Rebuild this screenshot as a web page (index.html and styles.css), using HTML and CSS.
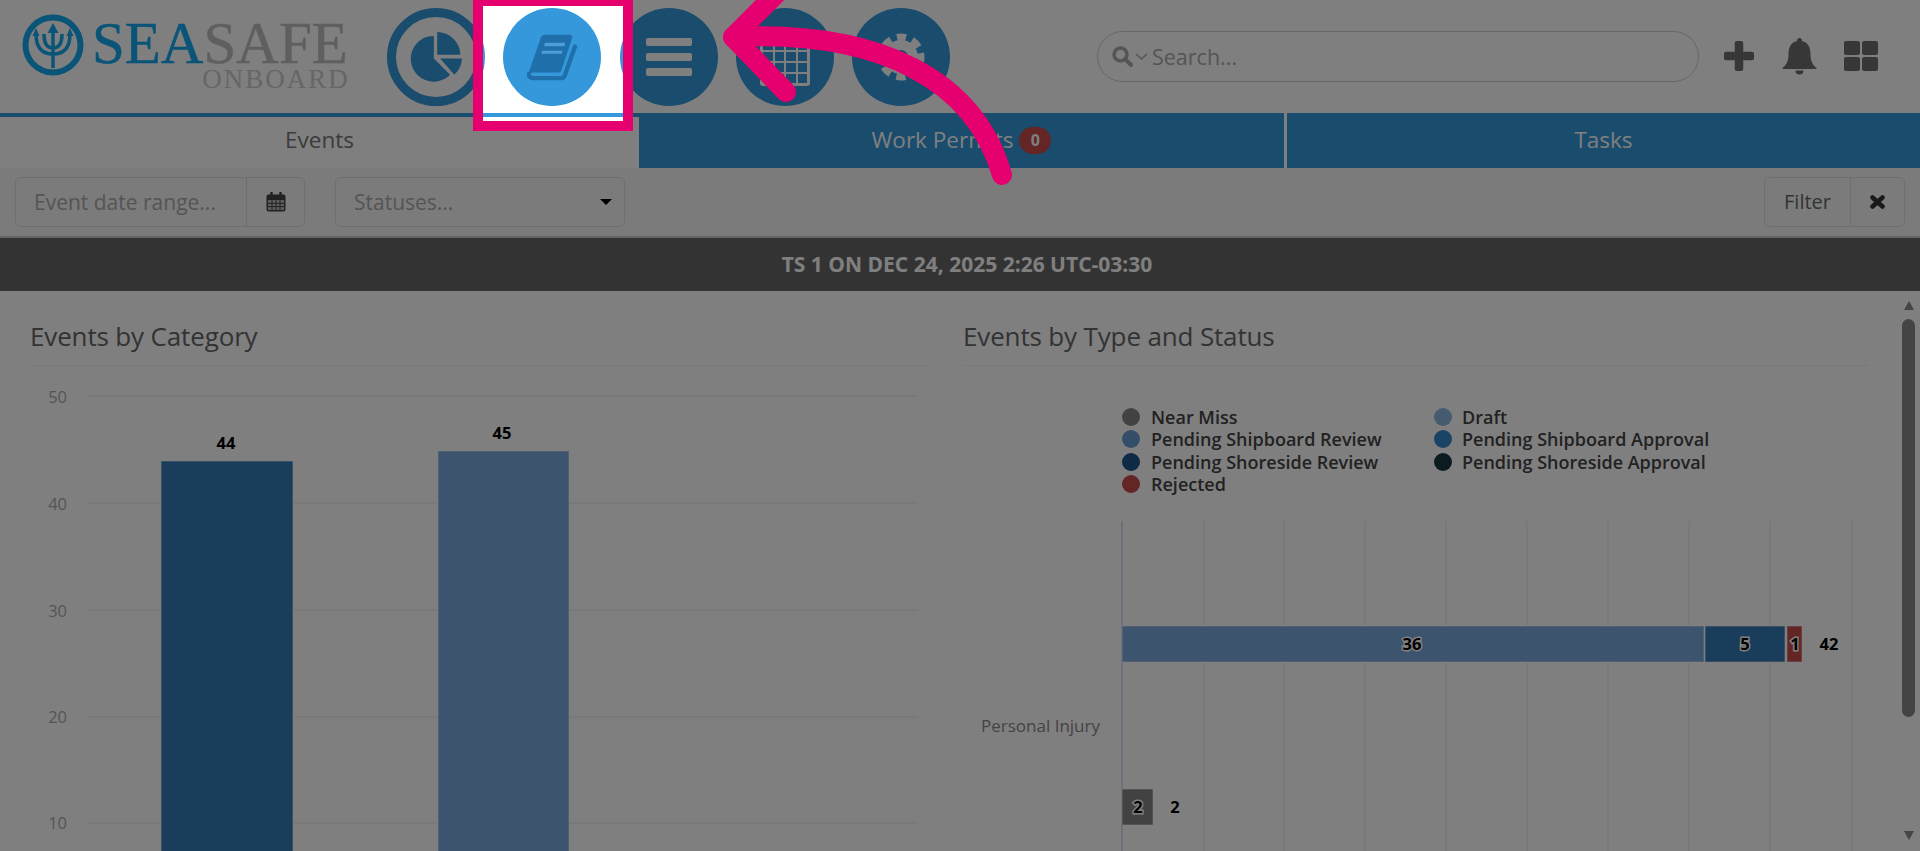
FILE: index.html
```html
<!DOCTYPE html>
<html>
  <head>
    <title>SeaSafe Onboard</title>
    <link rel="stylesheet" href="styles.css">
  </head>
  <body>
    <header class="topbar">
      <div class="logo">
        <svg class="logo-mark" viewBox="0 0 62 62">
          <circle cx="31" cy="31" r="27.5" fill="none" stroke="#14a8f0" stroke-width="6"/>
          <path d="M31 13v41M14 20c0 14 6 20 17 20s17-6 17-20M22 20c0 9 3 14 9 14s9-5 9-14" fill="none" stroke="#14a8f0" stroke-width="3.5"/>
          <path d="M31 9l-5.500 10h11zM14 14l-3.500 8h7zM48 14l-3.500 8h7z" fill="#14a8f0"/>
        </svg>
        <div class="logo-words">
          <div class="logo-name"><span class="logo-sea">SEA</span>SAFE</div>
          <div class="logo-sub">ONBOARD</div>
        </div>
      </div>

      <nav class="nav-circles">
        <a class="nav-circle ring">
          <svg width="53" height="52" viewBox="88 93 160 155" fill="#3498db">
            <path d="M160 107A69 69 0 1 0 209 224L160 175Z"/>
            <path d="M170 95A70 70 0 0 1 240 164H170Z"/>
            <path d="M179 175H245A72 72 0 0 1 222 224Z"/>
          </svg>
        </a>
        <a class="nav-circle current">
          <svg width="52" height="49" viewBox="440 100 156 146">
            <path d="M485 112Q488 105 497 105H570Q581 105 578 116L547 209Q545 218 537 218H462Q452 218 446 224Z" fill="#1f6fab"/>
            <path d="M587 140L556 228Q553 235 545 235H462Q448 235 449 222" fill="none" stroke="#1f6fab" stroke-width="13" stroke-linecap="round"/>
            <path d="M497 129H558L555 139H494ZM489 153H550L547 162H486Z" fill="#4d9fd8"/>
          </svg>
        </a>
        <a class="nav-circle">
          <svg width="46" height="38" viewBox="0 0 46 38" fill="#fff">
            <rect width="46" height="8" rx="2"/>
            <rect y="15" width="46" height="8" rx="2"/>
            <rect y="30" width="46" height="8" rx="2"/>
          </svg>
        </a>
        <a class="nav-circle">
          <svg class="table-icon" width="50" height="52" viewBox="760 33 50 52">
            <rect x="760" y="33" width="50" height="52" rx="3" fill="#fff"/>
            <path fill="#3498db" d="M763 40h10v9h-10zM775 40h9v9h-9zM786 40h10v9h-10zM798 40h9v9h-9zM763 51h10v9h-10zM775 51h9v9h-9zM786 51h10v9h-10zM798 51h9v9h-9zM763 62h10v9h-10zM775 62h9v9h-9zM786 62h10v9h-10zM798 62h9v9h-9zM763 73h10v9h-10zM775 73h9v9h-9zM786 73h10v9h-10zM798 73h9v9h-9z"/>
          </svg>
        </a>
        <a class="nav-circle">
          <svg width="48" height="48" viewBox="-24 -24 48 48" fill="none" stroke="#fff">
            <circle r="12" stroke-width="10"/>
            <circle r="19.5" stroke-width="8" stroke-dasharray="9 6.300" stroke-dashoffset="4.500"/>
          </svg>
        </a>
      </nav>

      <div class="tools">
        <div class="search">
          <svg width="21" height="21" viewBox="0 0 21 21" fill="none" stroke="#aaa">
            <circle cx="8.500" cy="8.500" r="6.500" stroke-width="3.500"/>
            <path d="M13 13l6 6" stroke-width="4" stroke-linecap="round"/>
          </svg>
          <svg class="search-chevron" width="13" height="7" viewBox="0 0 13 7" fill="none" stroke="#aaa" stroke-width="1.600">
            <path d="M1 1l5.500 5 5.500-5"/>
          </svg>
          <span>Search...</span>
        </div>
        <svg class="tool-plus" width="30" height="30" viewBox="0 0 30 30" fill="#6e6e6e">
          <rect x="10.750" width="8.500" height="30" rx="2"/>
          <rect y="10.750" width="30" height="8.500" rx="2"/>
        </svg>
        <svg class="tool-bell" width="35" height="37" viewBox="0 0 34 37" fill="#6e6e6e">
          <path d="M17 0a2.500 2.500 0 0 1 2.500 3C26 4.500 28 10 28 16c0 7 2 11 6 14v1H0v-1c4-3 6-7 6-14 0-6 2-11.500 8.500-13A2.500 2.500 0 0 1 17 0Z"/>
          <path d="M13 32.500h8a4 4 0 0 1-8 0Z"/>
        </svg>
        <svg class="tool-grid" width="34" height="30" viewBox="0 0 34 30" fill="#6e6e6e">
          <rect width="16" height="14" rx="2"/>
          <rect x="18" width="16" height="14" rx="2"/>
          <rect y="16" width="16" height="14" rx="2"/>
          <rect x="18" y="16" width="16" height="14" rx="2"/>
        </svg>
      </div>
    </header>

    <div class="tabs">
      <div class="tab active">Events</div>
      <div class="tab">Work Permits <span class="badge">0</span></div>
      <div class="tab last">Tasks</div>
    </div>

    <div class="filters">
      <div class="date-group">
        <div class="field">Event date range...</div>
        <div class="addon">
          <svg width="20" height="20" viewBox="0 0 20 20">
            <rect x="0.500" y="2.500" width="19" height="17" rx="2" fill="#444"/>
            <path d="M2 8h16v10H2z" fill="#bbb"/>
            <path d="M6 8v10M10 8v10M14 8v10M2 11.300h16M2 14.600h16" stroke="#444" stroke-width="1"/>
            <path d="M5.500 0v5M14.500 0v5" stroke="#444" stroke-width="2.400" stroke-linecap="round"/>
          </svg>
        </div>
      </div>
      <div class="status-select">
        <span>Statuses...</span>
        <i class="caret"></i>
      </div>
      <div class="filter-buttons">
        <div class="filter-btn">Filter</div>
        <div class="clear-btn">
          <svg width="15" height="14" viewBox="0 0 15 14" stroke="#333" stroke-width="4.500" stroke-linecap="round">
            <path d="M2.500 2.500l10 9M12.500 2.500l-10 9"/>
          </svg>
        </div>
      </div>
    </div>

    <div class="title-bar">TS 1 ON DEC 24, 2025 2:26 UTC-03:30</div>

    <main class="content">
      <div class="panels">
        <section>
          <h3 class="panel-title">Events by Category</h3>
          <svg class="chart" width="900" height="485" viewBox="30 366 900 485">
            <path class="grid-h" d="M88 396H918M88 503H918M88 610H918M88 717H918M88 823H918"/>
            <g class="axis-label" text-anchor="end">
              <text x="67" y="403">50</text>
              <text x="67" y="510">40</text>
              <text x="67" y="617">30</text>
              <text x="67" y="723">20</text>
              <text x="67" y="829">10</text>
            </g>
            <rect class="bar" x="161" y="461" width="132" height="400" fill="#347ab8"/>
            <rect class="bar" x="438" y="451" width="131" height="410" fill="#78a8dc"/>
            <g class="data-label" text-anchor="middle">
              <text x="226" y="449">44</text>
              <text x="502" y="439">45</text>
            </g>
          </svg>
        </section>

        <section>
          <h3 class="panel-title">Events by Type and Status</h3>
          <svg class="chart" width="905" height="485" viewBox="963 366 905 485">
            <g class="legend">
              <circle cx="1131" cy="417" r="9" fill="#858585"/>
              <text x="1151" y="424">Near Miss</text>
              <circle cx="1443" cy="417" r="9" fill="#8ab8e0"/>
              <text x="1462" y="424">Draft</text>
              <circle cx="1131" cy="439" r="9" fill="#6a9cd0"/>
              <text x="1151" y="446">Pending Shipboard Review</text>
              <circle cx="1443" cy="439" r="9" fill="#3488cc"/>
              <text x="1462" y="446">Pending Shipboard Approval</text>
              <circle cx="1131" cy="462" r="9" fill="#1e548a"/>
              <text x="1151" y="469">Pending Shoreside Review</text>
              <circle cx="1443" cy="462" r="9" fill="#1a3640"/>
              <text x="1462" y="469">Pending Shoreside Approval</text>
              <circle cx="1131" cy="484" r="9" fill="#c84a4a"/>
              <text x="1151" y="491">Rejected</text>
            </g>
            <path class="grid-v" d="M1204 521V851M1284 521V851M1365 521V851M1446 521V851M1527 521V851M1608 521V851M1689 521V851M1770 521V851M1852 521V851"/>
            <path class="axis-line" d="M1122 521V851"/>
            <rect class="bar" x="1122" y="626" width="582" height="36" fill="#78a8dc"/>
            <rect class="bar" x="1705" y="626" width="80" height="36" fill="#347ab8"/>
            <rect class="bar" x="1787" y="626" width="15" height="36" fill="#c84a4a"/>
            <rect class="bar" x="1122" y="789" width="31" height="36" fill="#858585"/>
            <g class="data-label outlined" text-anchor="middle">
              <text x="1412" y="650">36</text>
              <text x="1745" y="650">5</text>
              <text x="1795" y="650">1</text>
              <text x="1138" y="813">2</text>
            </g>
            <g class="data-label" text-anchor="middle">
              <text x="1829" y="650">42</text>
              <text x="1175" y="813">2</text>
            </g>
            <text class="category-label" x="1100" y="732" text-anchor="end">Personal Injury</text>
          </svg>
        </section>
      </div>

      <div class="scrollbar">
        <i class="scroll-up"></i>
        <div class="scroll-thumb"></div>
        <i class="scroll-down"></i>
      </div>
    </main>

    <div class="spotlight"></div>
    <svg class="arrow" width="1920" height="851" viewBox="0 0 1920 851">
      <path d="M1002 175C975 80 880 30 733 37"/>
      <path d="M790 -20L733 37L786 92"/>
    </svg>
  </body>
</html>
```

FILE: styles.css
```css
/* SeaSafe dashboard, dimmed by the spotlight's shadow */
html,
body {
  height: 100%;
}

body {
  margin: 0;
  background-color: #fff;
  color: #666;
  font-family: "Open Sans", sans-serif;
  overflow: hidden;
}

/* top bar */
.topbar {
  display: flex;
  height: 113px;
}

.logo {
  display: flex;
  margin-left: 22px;
  width: 326px;
}

.logo-mark {
  width: 62px;
  height: 62px;
  margin-top: 14px;
}

.logo-words {
  display: flex;
  flex-direction: column;
  align-items: flex-end;
  margin-left: 8px;
  margin-top: 14px;
  font-family: "Liberation Serif", serif;
}

.logo-name {
  font-size: 59px;
  line-height: 59px;
  color: #bebebe;
  white-space: nowrap;
  -webkit-text-stroke: 0.5px currentColor;
}

.logo-sea {
  color: #14a8f0;
}

.logo-sub {
  margin-top: -7px;
  margin-right: -2px;
  font-size: 27px;
  line-height: 27px;
  letter-spacing: 2px;
  color: #ccc;
}

.nav-circles {
  display: flex;
  gap: 18.25px;
  margin-left: 39px;
  padding-top: 8px;
}

.nav-circle {
  display: flex;
  align-items: center;
  justify-content: center;
  width: 98px;
  height: 98px;
  box-sizing: border-box;
  border-radius: 50%;
  background-color: #3498db;
}

.nav-circle.ring {
  background-color: transparent;
  border: 9px solid #3498db;
}

.table-icon {
  margin-top: 5px;
}

.tools {
  display: flex;
  align-items: flex-start;
  margin-left: auto;
  padding-right: 42px;
  padding-top: 31px;
}

.search {
  display: flex;
  align-items: center;
  width: 602px;
  height: 51px;
  box-sizing: border-box;
  padding-left: 14px;
  border: 1.5px solid #ccc;
  border-radius: 26px;
  color: #aaa;
  font-size: 21.5px;
}

.search-chevron {
  margin: 0 4px 0 2px;
}

.tool-plus {
  margin: 10px 0 0 25px;
}

.tool-bell {
  margin: 7px 0 0 28px;
}

.tool-grid {
  margin: 10px 0 0 27px;
}

/* tabs */
.tabs {
  display: grid;
  grid-template-columns: 639px 645px 1fr;
  height: 55px;
}

.tab {
  display: flex;
  align-items: center;
  justify-content: center;
  gap: 6px;
  padding-bottom: 3px;
  box-sizing: border-box;
  background-color: #3498db;
  color: #fff;
  font-size: 22.5px;
}

.tab.active {
  padding-bottom: 7px;
  background-color: #fff;
  border-top: 4px solid #3498db;
  color: #777;
}

.tab.last {
  border-left: 3px solid #fff;
}

.badge {
  display: inline-block;
  width: 32px;
  height: 27px;
  margin-top: 3px;
  border-radius: 14px;
  background-color: #c84a4a;
  color: #fff;
  font-size: 16px;
  font-weight: 700;
  line-height: 27px;
  text-align: center;
}

/* filter row */
.filters {
  display: flex;
  align-items: center;
  height: 68px;
  padding: 0 15px;
  background-color: #f7f7f7;
  border-bottom: 2px solid #ccc;
}

.date-group {
  display: flex;
  width: 290px;
  height: 50px;
  box-sizing: border-box;
  border: 1px solid #ddd;
  border-radius: 6px;
}

.field {
  flex: 1;
  padding-left: 18px;
  color: #aaa;
  font-size: 21px;
  line-height: 48px;
}

.addon {
  display: flex;
  align-items: center;
  justify-content: center;
  width: 57px;
  border-left: 1px solid #ddd;
}

.status-select {
  display: flex;
  align-items: center;
  justify-content: space-between;
  width: 290px;
  height: 50px;
  box-sizing: border-box;
  margin-left: 30px;
  padding: 0 12px 0 18px;
  border: 1px solid #ddd;
  border-radius: 6px;
  color: #aaa;
  font-size: 21px;
}

.caret {
  border-top: 6px solid #000;
  border-left: 6px solid transparent;
  border-right: 6px solid transparent;
}

.filter-buttons {
  display: flex;
  height: 50px;
  margin-left: auto;
  box-sizing: border-box;
  border: 1px solid #ddd;
  border-radius: 6px;
}

.filter-btn {
  width: 85px;
  color: #666;
  font-size: 20px;
  line-height: 48px;
  text-align: center;
}

.clear-btn {
  display: flex;
  align-items: center;
  justify-content: center;
  width: 53px;
  border-left: 1px solid #ddd;
}

.title-bar {
  height: 53px;
  padding-left: 14px;
  background-color: #666;
  color: #fff;
  font-size: 21px;
  font-weight: 700;
  line-height: 53px;
  text-align: center;
}

/* charts */
.content {
  display: flex;
  justify-content: space-between;
}

.panels {
  display: grid;
  grid-template-columns: 900px 905px;
  column-gap: 33px;
  padding-left: 30px;
}

.panel-title {
  margin: 0;
  padding: 27px 0 11px;
  border-bottom: 1px solid #eee;
  color: #666;
  font-size: 26px;
  font-weight: 400;
  letter-spacing: -0.15px;
  line-height: 36px;
}

.chart {
  display: block;
}

.grid-h,
.grid-v {
  fill: none;
  stroke: #e6e6e6;
  stroke-width: 1;
}

.axis-line {
  fill: none;
  stroke: #ccd6eb;
  stroke-width: 1.5;
}

.axis-label text {
  fill: #aaa;
  font-size: 16.5px;
}

.bar {
  stroke: #fff;
  stroke-opacity: 0.6;
  stroke-width: 1;
}

.data-label text {
  fill: #000;
  font-size: 16.5px;
  font-weight: 700;
}

.data-label.outlined text {
  stroke: #fff;
  stroke-width: 3px;
  paint-order: stroke;
}

.legend text {
  fill: #444;
  font-size: 18px;
  font-weight: 600;
}

.category-label {
  fill: #888;
  font-size: 17px;
}

.scrollbar {
  display: flex;
  flex-direction: column;
  align-items: center;
  width: 23px;
  padding-top: 10px;
}

.scroll-up,
.scroll-down {
  border-left: 5.5px solid transparent;
  border-right: 5.5px solid transparent;
}

.scroll-up {
  border-bottom: 9px solid #888;
}

.scroll-down {
  margin-top: 114px;
  border-top: 9px solid #888;
}

.scroll-thumb {
  width: 13px;
  height: 398px;
  margin-top: 9px;
  border-radius: 7px;
  background-color: #888;
}

/* tutorial overlay */
.spotlight {
  position: absolute;
  left: 473px;
  top: -4px;
  width: 140px;
  height: 115px;
  border: 10px solid #e6006f;
  box-shadow: 0 0 0 3000px rgba(0, 0, 0, 0.5);
}

.arrow {
  position: absolute;
  left: 0;
  top: 0;
  fill: none;
  stroke: #e6006f;
  stroke-width: 20;
  stroke-linecap: round;
  stroke-linejoin: round;
}
```
